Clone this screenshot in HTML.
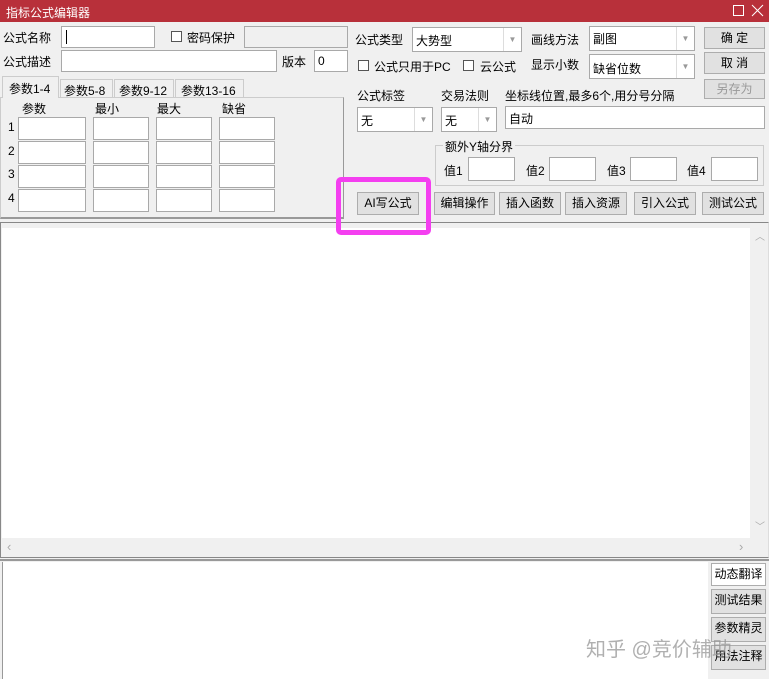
<!DOCTYPE html>
<html><head><meta charset="utf-8"><style>
*{box-sizing:border-box;margin:0;padding:0}
body{width:769px;height:679px;background:#f0f0f0;position:relative;overflow:hidden;font-family:"Liberation Sans","Noto Sans CJK SC",sans-serif;font-size:12px;color:#000}
.a{position:absolute;white-space:nowrap}
.in{position:absolute;background:#fff;border:1px solid #a9a9a9}
.btn{position:absolute;background:#e1e1e1;border:1px solid #adadad;text-align:center;line-height:20px;font-size:12px}
.cb{position:absolute;width:11px;height:11px;border:1px solid #555;background:#fff}
.cmb{position:absolute;background:#fff;border:1px solid #a9a9a9}
.cmb .ar{position:absolute;right:0;top:0;bottom:0;width:18px;border-left:1px solid #ddd;color:#999;font-size:8px;text-align:center}
.t{position:absolute;white-space:nowrap;font-size:12px}
</style></head><body>
<div class="a" style="left:0;top:0;width:769px;height:22px;background:#b8303a"></div>
<div class="t" style="left:6px;top:4px;color:#fff;font-size:12px">指标公式编辑器</div>
<div class="a" style="left:733px;top:5px;width:11px;height:11px;border:1px solid #fff"></div>
<svg class="a" style="left:751px;top:4px" width="13" height="13"><path d="M1 1L12 12M12 1L1 12" stroke="#fff" stroke-width="1"/></svg>

<div class="t" style="left:3px;top:29px">公式名称</div>
<div class="in" style="left:61px;top:26px;width:94px;height:22px"><div class="a" style="left:4px;top:3px;width:1px;height:14px;background:#000"></div></div>
<div class="cb" style="left:171px;top:31px"></div>
<div class="t" style="left:187px;top:29px">密码保护</div>
<div class="in" style="left:244px;top:26px;width:104px;height:22px;background:#f0f0f0"></div>
<div class="t" style="left:3px;top:53px">公式描述</div>
<div class="in" style="left:61px;top:50px;width:216px;height:22px"></div>
<div class="t" style="left:282px;top:53px">版本</div>
<div class="in" style="left:314px;top:50px;width:34px;height:22px"><span class="a" style="left:3px;top:3px">0</span></div>

<div class="a" style="left:0;top:97px;width:344px;height:122px;border:1px solid #ccc;border-right-color:#999;border-bottom:2px solid #999;background:#f0f0f0"></div>
<div class="a" style="left:2px;top:76px;width:57px;height:22px;border:1px solid #ccc;border-bottom:none;background:#f0f0f0"></div>
<div class="t" style="left:9px;top:80px">参数1-4</div>
<div class="a" style="left:60px;top:79px;width:53px;height:19px;border:1px solid #ccc;border-bottom:none"></div>
<div class="t" style="left:64px;top:82px">参数5-8</div>
<div class="a" style="left:114px;top:79px;width:60px;height:19px;border:1px solid #ccc;border-bottom:none"></div>
<div class="t" style="left:119px;top:82px">参数9-12</div>
<div class="a" style="left:175px;top:79px;width:69px;height:19px;border:1px solid #ccc;border-bottom:none"></div>
<div class="t" style="left:181px;top:82px">参数13-16</div>
<div class="t" style="left:22px;top:100px">参数</div>
<div class="t" style="left:95px;top:100px">最小</div>
<div class="t" style="left:157px;top:100px">最大</div>
<div class="t" style="left:222px;top:100px">缺省</div>
<div class="t" style="left:8px;top:120px">1</div><div class="t" style="left:8px;top:144px">2</div><div class="t" style="left:8px;top:167px">3</div><div class="t" style="left:8px;top:191px">4</div>
<div class="in" style="left:18px;top:117px;width:68px;height:23px"></div><div class="in" style="left:93px;top:117px;width:56px;height:23px"></div><div class="in" style="left:156px;top:117px;width:56px;height:23px"></div><div class="in" style="left:219px;top:117px;width:56px;height:23px"></div>
<div class="in" style="left:18px;top:141px;width:68px;height:23px"></div><div class="in" style="left:93px;top:141px;width:56px;height:23px"></div><div class="in" style="left:156px;top:141px;width:56px;height:23px"></div><div class="in" style="left:219px;top:141px;width:56px;height:23px"></div>
<div class="in" style="left:18px;top:165px;width:68px;height:23px"></div><div class="in" style="left:93px;top:165px;width:56px;height:23px"></div><div class="in" style="left:156px;top:165px;width:56px;height:23px"></div><div class="in" style="left:219px;top:165px;width:56px;height:23px"></div>
<div class="in" style="left:18px;top:189px;width:68px;height:23px"></div><div class="in" style="left:93px;top:189px;width:56px;height:23px"></div><div class="in" style="left:156px;top:189px;width:56px;height:23px"></div><div class="in" style="left:219px;top:189px;width:56px;height:23px"></div>

<div class="t" style="left:355px;top:31px">公式类型</div>
<div class="cmb" style="left:412px;top:27px;width:110px;height:25px"><span class="a" style="left:3px;top:4px">大势型</span><div class="ar" style="line-height:23px">▼</div></div>
<div class="t" style="left:531px;top:31px">画线方法</div>
<div class="cmb" style="left:589px;top:26px;width:106px;height:25px"><span class="a" style="left:3px;top:3px">副图</span><div class="ar" style="line-height:23px">▼</div></div>
<div class="btn" style="left:704px;top:27px;width:61px;height:22px">确 定</div>
<div class="cb" style="left:358px;top:60px"></div>
<div class="t" style="left:374px;top:58px">公式只用于PC</div>
<div class="cb" style="left:463px;top:60px"></div>
<div class="t" style="left:480px;top:58px">云公式</div>
<div class="t" style="left:531px;top:56px">显示小数</div>
<div class="cmb" style="left:589px;top:54px;width:106px;height:25px"><span class="a" style="left:3px;top:5px">缺省位数</span><div class="ar" style="line-height:23px">▼</div></div>
<div class="btn" style="left:704px;top:52px;width:61px;height:22px">取 消</div>
<div class="btn" style="left:704px;top:79px;width:61px;height:20px;color:#999;line-height:18px">另存为</div>
<div class="t" style="left:357px;top:87px">公式标签</div>
<div class="t" style="left:441px;top:87px">交易法则</div>
<div class="t" style="left:505px;top:87px">坐标线位置,最多6个,用分号分隔</div>
<div class="cmb" style="left:357px;top:107px;width:76px;height:25px"><span class="a" style="left:3px;top:4px">无</span><div class="ar" style="line-height:23px">▼</div></div>
<div class="cmb" style="left:441px;top:107px;width:56px;height:25px"><span class="a" style="left:3px;top:4px">无</span><div class="ar" style="line-height:23px">▼</div></div>
<div class="in" style="left:505px;top:106px;width:260px;height:23px"><span class="a" style="left:3px;top:3px">自动</span></div>
<div class="a" style="left:435px;top:145px;width:329px;height:41px;border:1px solid #ccc"></div>
<div class="t" style="left:443px;top:138px;background:#f0f0f0;padding:0 2px">额外Y轴分界</div>
<div class="t" style="left:444px;top:162px">值1</div><div class="in" style="left:468px;top:157px;width:47px;height:24px"></div>
<div class="t" style="left:526px;top:162px">值2</div><div class="in" style="left:549px;top:157px;width:47px;height:24px"></div>
<div class="t" style="left:607px;top:162px">值3</div><div class="in" style="left:630px;top:157px;width:47px;height:24px"></div>
<div class="t" style="left:687px;top:162px">值4</div><div class="in" style="left:711px;top:157px;width:47px;height:24px"></div>

<div class="btn" style="left:357px;top:192px;width:62px;height:23px">AI写公式</div>
<div class="btn" style="left:434px;top:192px;width:61px;height:23px">编辑操作</div>
<div class="btn" style="left:499px;top:192px;width:62px;height:23px">插入函数</div>
<div class="btn" style="left:565px;top:192px;width:62px;height:23px">插入资源</div>
<div class="btn" style="left:634px;top:192px;width:62px;height:23px">引入公式</div>
<div class="btn" style="left:702px;top:192px;width:62px;height:23px">测试公式</div>

<div class="a" style="left:0;top:222px;width:769px;height:336px;border:1px solid #888;border-right-color:#ddd;background:#f0f0f0"></div>
<div class="a" style="left:2px;top:228px;width:748px;height:310px;background:#fff"></div>
<div class="t" style="left:755px;top:228px;color:#aaa;font-size:10px">︿</div>
<div class="t" style="left:755px;top:518px;color:#aaa;font-size:10px">﹀</div>
<div class="t" style="left:7px;top:539px;color:#aaa;font-size:13px">‹</div>
<div class="t" style="left:739px;top:539px;color:#aaa;font-size:13px">›</div>
<div class="a" style="left:0;top:559px;width:769px;height:120px;border-top:2px solid #999"></div>
<div class="a" style="left:2px;top:562px;width:706px;height:117px;background:#fff;border-left:1px solid #999"></div>
<div class="btn" style="left:711px;top:563px;width:55px;height:23px;background:#fff">动态翻译</div>
<div class="btn" style="left:711px;top:589px;width:55px;height:25px">测试结果</div>
<div class="btn" style="left:711px;top:617px;width:55px;height:25px">参数精灵</div>
<div class="btn" style="left:711px;top:645px;width:55px;height:25px">用法注释</div>
<div class="t" style="left:586px;top:633px;font-size:20px;color:rgba(150,150,150,0.75)">知乎 @竞价辅助</div>
<div class="a" style="left:336px;top:177px;width:95px;height:58px;border:5px solid #f43ff0;border-radius:5px"></div>
</body></html>
